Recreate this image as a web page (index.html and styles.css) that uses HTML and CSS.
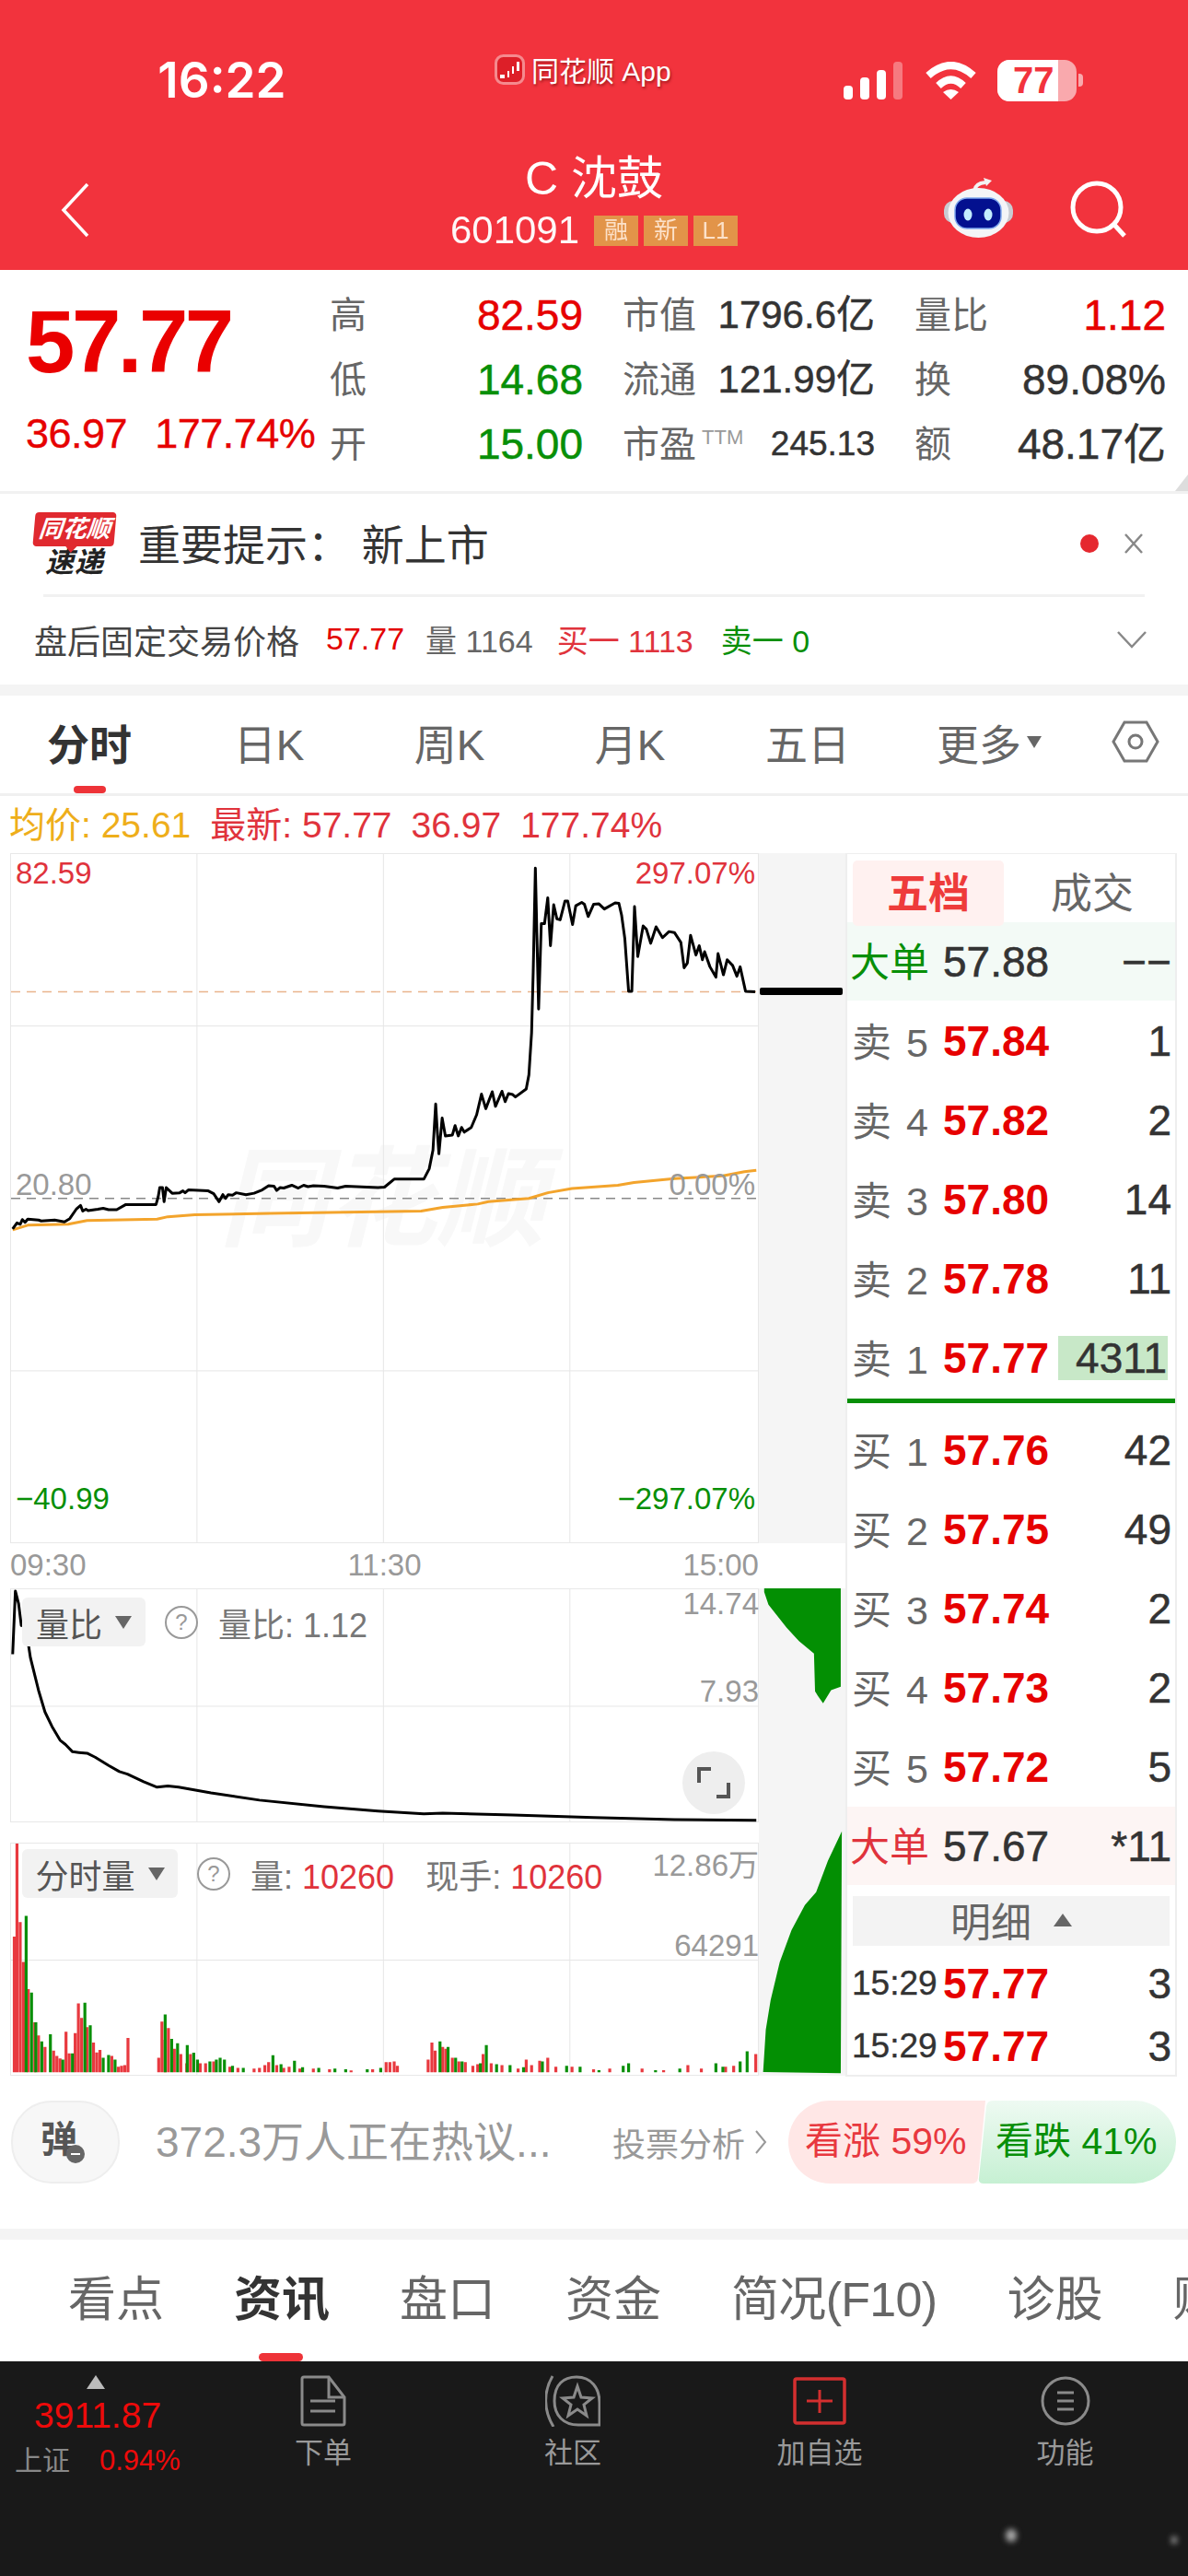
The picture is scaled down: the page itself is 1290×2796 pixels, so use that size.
FILE: index.html
```html
<!DOCTYPE html>
<html lang="zh-CN">
<head>
    <meta charset="UTF-8">
    <title>C沈鼓 601091</title>
    <link rel="stylesheet" href="styles.css">
</head>
<body>
<div class="page">

    <!-- red header -->
    <header class="topbar">
        <div class="status">
            <div class="status-time">16:22</div>
            <div class="status-app">
                <svg class="app-logo" width="33" height="33" viewBox="0 0 33 33">
                    <rect x="1.5" y="1.5" width="30" height="30" rx="8" fill="#dd1f28" stroke="#f58a8e" stroke-width="3"/>
                    <path d="M6 22h5v4H6zM14 18h2v7h-2zM19 13h2v8h-2zM24 8h3v10h-3z" fill="#fff"/>
                </svg>
                <span>同花顺 App</span>
            </div>
            <div class="status-icons">
                <div class="signal">
                    <i class="bar-1"></i><i class="bar-2"></i><i class="bar-3"></i><i class="bar-4"></i>
                </div>
                <svg width="57" height="41" viewBox="0 0 57 41">
                    <path d="M4 15Q28.500 -7 53 15" fill="none" stroke="#fff" stroke-width="8"/>
                    <path d="M15 26Q28.500 13 42 26" fill="none" stroke="#fff" stroke-width="8"/>
                    <path d="M20 33Q28.500 27 37 33L28.500 41Z" fill="#fff"/>
                </svg>
                <div class="battery"><div class="battery-level">77</div></div>
                <div class="battery-cap"></div>
            </div>
        </div>
        <div class="nav">
            <div class="nav-left">
                <svg width="32" height="60" viewBox="0 0 32 60"><path d="M29 2L3 30L29 58" fill="none" stroke="#fff" stroke-width="3.500"/></svg>
            </div>
            <div class="nav-title">
                <div class="stock-name">C 沈鼓</div>
                <div class="stock-code">
                    <span>601091</span>
                    <b class="tag">融</b><b class="tag">新</b><b class="tag">L1</b>
                </div>
            </div>
            <div class="nav-right">
                <svg width="75" height="66" viewBox="0 0 75 66">
                    <path d="M33 15Q34 7 45 6" fill="none" stroke="#f3f3f3" stroke-width="4"/>
                    <path d="M43 1L52 4L46 10Z" fill="#f3f3f3"/>
                    <rect x="0" y="26" width="75" height="24" rx="10" fill="#c9ccd2"/>
                    <ellipse cx="37.500" cy="39" rx="33" ry="27" fill="#f4f5f7"/>
                    <rect x="12" y="23" width="50" height="33" rx="13" fill="#03108f" stroke="#7fa8ee" stroke-width="1.500"/>
                    <ellipse cx="26" cy="41" rx="4.500" ry="6.500" fill="#c4edff"/>
                    <ellipse cx="48" cy="41" rx="4.500" ry="6.500" fill="#c4edff"/>
                </svg>
                <svg width="62" height="62" viewBox="0 0 62 62">
                    <circle cx="29" cy="29" r="26" fill="none" stroke="#fff" stroke-width="5"/>
                    <path d="M48 48L59 60" stroke="#fff" stroke-width="5"/>
                </svg>
            </div>
        </div>
    </header>

    <!-- quote summary -->
    <section class="quote">
        <div class="quote-main">
            <div class="last-price">57.77</div>
            <div class="last-change"><span>36.97</span><span>177.74%</span></div>
        </div>
        <div class="quote-grid">
            <div class="cell"><span class="label">高</span><span class="up big">82.59</span></div>
            <div class="cell"><span class="label">市值</span><span class="val">1796.6亿</span></div>
            <div class="cell"><span class="label">量比</span><span class="up big">1.12</span></div>
            <div class="cell"><span class="label">低</span><span class="down big">14.68</span></div>
            <div class="cell"><span class="label">流通</span><span class="val">121.99亿</span></div>
            <div class="cell"><span class="label">换</span><span class="val big">89.08%</span></div>
            <div class="cell"><span class="label">开</span><span class="down big">15.00</span></div>
            <div class="cell"><span class="label">市盈<sup class="ttm">TTM</sup></span><span class="val small">245.13</span></div>
            <div class="cell"><span class="label">额</span><span class="val big">48.17亿</span></div>
        </div>
        <div class="corner"></div>
    </section>

    <!-- notice -->
    <section class="notice">
        <div class="notice-top">
            <div class="flash-logo">
                <div class="flash-red">同花顺</div>
                <div class="flash-dark">速递</div>
            </div>
            <div class="notice-text">重要提示： 新上市</div>
            <div class="notice-dot"></div>
            <svg width="24" height="24" viewBox="0 0 24 24"><path d="M3 2L21 22M21 2L3 22" stroke="#888" stroke-width="2.500"/></svg>
        </div>
        <div class="notice-bottom">
            <span class="after-title">盘后固定交易价格</span>
            <span class="red">57.77</span>
            <span class="grey">量 1164</span>
            <span class="red-soft">买一 1113</span>
            <span class="green">卖一 0</span>
            <svg class="chev" width="34" height="20" viewBox="0 0 34 20"><path d="M2 2L17 18L32 2" fill="none" stroke="#888" stroke-width="2.500"/></svg>
        </div>
    </section>

    <!-- period tabs -->
    <nav class="periods">
        <div class="period active">分时</div>
        <div class="period">日K</div>
        <div class="period">周K</div>
        <div class="period">月K</div>
        <div class="period">五日</div>
        <div class="period">更多<i class="more-arrow"></i></div>
        <div class="period">
            <svg width="52" height="46" viewBox="0 0 52 46">
                <path d="M14 2H38L50 23L38 44H14L2 23Z" fill="none" stroke="#777" stroke-width="3"/>
                <circle cx="26" cy="23" r="7" fill="none" stroke="#777" stroke-width="3"/>
            </svg>
        </div>
    </nav>

    <div class="priceline">
        <span class="avg">均价: 25.61</span>
        <span class="new">最新: 57.77</span>
        <span class="new">36.97</span>
        <span class="new">177.74%</span>
    </div>

    <!-- chart + order book -->
    <section class="market">
        <div class="charts">
            <div class="chart-row main-row">
                <div class="plot">
                    <div class="watermark">同花顺</div>
                    <svg class="plot-svg" viewBox="19 50 1386 1465" preserveAspectRatio="none">
                        <path class="grid" d="M364 50V1515M710 50V1515M1056 50V1515M19 416H1405M19 1150H1405"/>
                        <path class="dash-orange" d="M19 343H1405"/>
                        <path class="dash-grey" d="M19 783H1405"/>
                        <polyline class="line-avg" points="22,850 50,840 125,838 160,830 290,827 310,822 360,818 500,815 780,810 820,802 885,795 905,790 980,783 1015,771 1060,762 1145,755 1175,749 1250,741 1340,735 1380,726 1402,723"/>
                        <polyline class="line-price" points="22,848 30,835 36,838 40,828 45,834 50,827 70,829 75,831 100,829 118,833 128,826 140,806 148,798 152,810 158,806 162,809 180,806 190,804 200,807 215,807 232,796 288,796 292,780 295,760 300,760 303,790 307,760 318,772 332,771 338,767 342,771 348,765 385,767 395,773 405,790 412,775 417,783 422,775 430,776 437,771 455,775 470,772 485,765 497,756 507,757 512,766 518,760 525,761 540,755 552,761 562,755 570,758 580,756 600,757 625,761 640,757 660,758 700,760 712,759 730,742 785,742 795,720 802,680 807,582 810,640 813,688 819,612 825,650 838,648 843,628 849,650 855,632 860,642 873,632 883,605 892,561 900,592 912,556 918,587 930,555 936,577 942,560 950,562 955,567 975,550 980,520 985,430 988,300 992,80 998,380 1003,198 1009,198 1015,143 1020,245 1026,158 1032,188 1038,190 1047,150 1052,150 1061,200 1067,160 1078,153 1083,157 1090,183 1100,157 1110,156 1120,167 1140,154 1147,155 1152,180 1158,230 1165,342 1171,342 1176,162 1182,268 1192,203 1198,210 1206,240 1216,205 1228,228 1240,215 1250,217 1262,238 1268,292 1274,282 1280,223 1290,265 1296,245 1302,275 1306,258 1316,290 1327,312 1331,262 1341,307 1348,275 1358,287 1366,310 1372,290 1382,342 1400,343"/>
                    </svg>
                    <span class="tag-tl red-soft">82.59</span>
                    <span class="tag-tr red-soft">297.07%</span>
                    <span class="tag-ml muted">20.80</span>
                    <span class="tag-mr muted">0.00%</span>
                    <span class="tag-bl green">−40.99</span>
                    <span class="tag-br green">−297.07%</span>
                </div>
                <div class="side"><div class="side-bar"></div></div>
            </div>

            <div class="axis"><span>09:30</span><span>11:30</span><span>15:00</span></div>

            <div class="chart-row ratio-row">
                <div class="plot ratio-plot">
                    <svg class="plot-svg" viewBox="19 160 1386 643" preserveAspectRatio="none">
                        <path class="grid" d="M364 160V803M710 160V803M1056 160V803M19 484H1405"/>
                        <polyline class="line-price" points="22,340 27,165 33,200 38,260 46,262 55,350 70,440 82,500 95,540 110,578 120,590 133,610 145,612 160,614 175,625 200,648 220,665 235,672 265,693 290,708 310,705 330,708 390,724 480,744 600,762 700,774 785,782 820,780 950,785 1100,792 1250,798 1402,800"/>
                    </svg>
                    <div class="plot-tools">
                        <div class="picker picker-ratio">量比<i class="picker-arrow"></i></div>
                        <div class="help">?</div>
                        <span>量比: 1.12</span>
                    </div>
                    <span class="scale scale-ratio-a">14.74</span>
                    <span class="scale scale-ratio-b">7.93</span>
                    <div class="expand">
                        <svg width="36" height="36" viewBox="0 0 36 36"><path d="M2 18V3H15M34 18V33H21" fill="none" stroke="#555" stroke-width="4"/></svg>
                    </div>
                </div>
                <div class="side">
                    <svg class="side-svg" viewBox="1405 160 160 643" preserveAspectRatio="none">
                        <polygon points="1415,160 1558,160 1558,430 1540,440 1525,476 1515,455 1510,443 1508,339 1480,305 1457,268 1423,205 1415,170" fill="#038f03"/>
                    </svg>
                </div>
            </div>

            <div class="chart-row volume-row">
                <div class="plot">
                    <svg class="plot-svg" viewBox="19 858 1386 639" preserveAspectRatio="none">
                        <path class="grid" d="M364 858V1497M710 858V1497M1056 858V1497M19 1180H1405"/>
                        <path class="vol-red" d="M25 1490V1115M30 1490V858M36 1490V1075M42 1490V1185M51 1490V1260M63 1490V1352M70 1490V1388M82 1490V1420M98 1490V1430M104 1490V1445M110 1490V1452M121 1490V1378M127 1490V1438M138 1490V1382M144 1490V1300M150 1490V1340M160 1490V1365M172 1490V1408M178 1490V1435M184 1490V1428M206 1490V1445M218 1490V1475M224 1490V1472M230 1490V1470M236 1490V1395M293 1490V1450M299 1490V1350M305 1490V1400M311 1490V1368M322 1490V1425M334 1490V1440M345 1490V1465M352 1490V1440M370 1490V1465M380 1490V1465M395 1490V1460M425 1490V1475M440 1490V1478M470 1490V1480M480 1490V1478M490 1490V1470M497 1490V1462M512 1490V1470M525 1490V1478M535 1490V1475M555 1490V1480M580 1490V1480M610 1490V1482M650 1490V1485M690 1490V1482M715 1490V1462M722 1490V1462M730 1490V1460M736 1490V1472M793 1490V1455M800 1490V1408M806 1490V1430M820 1490V1420M826 1490V1425M838 1490V1450M850 1490V1460M862 1490V1462M876 1490V1472M885 1490V1468M895 1490V1440M910 1490V1465M930 1490V1470M960 1490V1480M975 1490V1455M985 1490V1470M1000 1490V1458M1015 1490V1450M1030 1490V1475M1060 1490V1475M1100 1490V1482M1130 1490V1480M1190 1490V1480M1230 1490V1484M1275 1490V1470M1300 1490V1480M1345 1490V1475M1360 1490V1472M1401 1490V1440"/>
                        <path class="vol-green" d="M47 1490V1058M57 1490V1270M65 1490V1352M76 1490V1405M92 1490V1385M115 1490V1455M133 1490V1438M156 1490V1298M166 1490V1360M190 1490V1450M200 1490V1442M212 1490V1455M305 1490V1330M317 1490V1398M328 1490V1410M346 1490V1415M358 1490V1436M365 1490V1455M388 1490V1460M400 1490V1455M407 1490V1450M415 1490V1455M430 1490V1472M450 1490V1478M505 1490V1443M520 1490V1468M545 1490V1458M560 1490V1476M590 1490V1478M620 1490V1480M640 1490V1482M680 1490V1482M705 1490V1478M815 1490V1405M830 1490V1420M844 1490V1450M856 1490V1460M890 1490V1465M901 1490V1415M920 1490V1468M945 1490V1470M970 1490V1476M1005 1490V1460M1050 1490V1472M1075 1490V1475M1110 1490V1484M1155 1490V1472M1165 1490V1465M1215 1490V1484M1260 1490V1480M1327 1490V1465M1340 1490V1475M1372 1490V1460M1385 1490V1432"/>
                    </svg>
                    <div class="plot-tools volume-tools">
                        <div class="picker picker-volume">分时量<i class="picker-arrow"></i></div>
                        <div class="help">?</div>
                        <span>量: <em>10260</em></span>
                        <span class="now-hand">现手: <em>10260</em></span>
                    </div>
                    <span class="scale scale-vol-a">12.86万</span>
                    <span class="scale scale-vol-b">64291</span>
                </div>
                <div class="side">
                    <svg class="side-svg" viewBox="1405 858 160 639" preserveAspectRatio="none">
                        <polygon points="1560,827 1534,908 1512,994 1491,1029 1466,1098 1444,1186 1427,1290 1418,1371 1413,1487 1558,1490" fill="#038f03"/>
                    </svg>
                </div>
            </div>
        </div>

        <aside class="book">
            <div class="book-tabs">
                <div class="book-tab on">五档</div>
                <div class="book-tab">成交</div>
            </div>
            <div class="book-row big-sell"><span class="big-label green">大单</span><span class="price dark">57.88</span><span class="qty">−−</span></div>
            <div class="book-row"><span class="side-label">卖 5</span><span class="price">57.84</span><span class="qty">1</span></div>
            <div class="book-row"><span class="side-label">卖 4</span><span class="price">57.82</span><span class="qty">2</span></div>
            <div class="book-row"><span class="side-label">卖 3</span><span class="price">57.80</span><span class="qty">14</span></div>
            <div class="book-row"><span class="side-label">卖 2</span><span class="price">57.78</span><span class="qty">11</span></div>
            <div class="book-row"><span class="side-label">卖 1</span><span class="price">57.77</span><span class="qty qty-hl">4311</span></div>
            <div class="book-split"></div>
            <div class="book-row"><span class="side-label">买 1</span><span class="price">57.76</span><span class="qty">42</span></div>
            <div class="book-row"><span class="side-label">买 2</span><span class="price">57.75</span><span class="qty">49</span></div>
            <div class="book-row"><span class="side-label">买 3</span><span class="price">57.74</span><span class="qty">2</span></div>
            <div class="book-row"><span class="side-label">买 4</span><span class="price">57.73</span><span class="qty">2</span></div>
            <div class="book-row"><span class="side-label">买 5</span><span class="price">57.72</span><span class="qty">5</span></div>
            <div class="book-row big-buy"><span class="big-label red-soft">大单</span><span class="price dark">57.67</span><span class="qty">*11</span></div>
            <div class="detail-head">明细<i class="detail-arrow"></i></div>
            <div class="book-row tick"><span class="tick-time">15:29</span><span class="price">57.77</span><span class="qty green">3</span></div>
            <div class="book-row tick"><span class="tick-time">15:29</span><span class="price">57.77</span><span class="qty green">3</span></div>
        </aside>
    </section>

    <!-- discussion / vote -->
    <section class="talk">
        <div class="danmu">弹<i class="danmu-off"></i></div>
        <div class="talk-text">372.3万人正在热议...</div>
        <div class="vote-link">投票分析 <svg width="14" height="28" viewBox="0 0 14 28"><path d="M2 2L12 14L2 26" fill="none" stroke="#999" stroke-width="2"/></svg></div>
        <div class="vote">
            <svg class="vote-bg" width="421" height="90" viewBox="0 0 421 90">
                <defs>
                    <linearGradient id="voteGreen" x1="0" y1="0" x2="0" y2="1"><stop offset="0" stop-color="#eefaf2"/><stop offset="1" stop-color="#c6f0d3"/></linearGradient>
                </defs>
                <path d="M45 0H214L206 84Q205 90 199 90H45A45 45 0 0 1 45 0Z" fill="#ffe7e6"/>
                <path d="M222 0H376A45 45 0 0 1 376 90H212Q206 90 207 84L215 6Q216 0 222 0Z" fill="url(#voteGreen)"/>
            </svg>
            <span class="vote-up">看涨 59%</span>
            <span class="vote-down">看跌 41%</span>
        </div>
    </section>

    <!-- info tabs -->
    <nav class="info-tabs">
        <div class="info-tab">看点</div>
        <div class="info-tab active">资讯</div>
        <div class="info-tab">盘口</div>
        <div class="info-tab">资金</div>
        <div class="info-tab info-f10">简况(F10)</div>
        <div class="info-tab">诊股</div>
        <div class="info-tab">财务</div>
    </nav>

    <!-- bottom bar -->
    <footer class="dock">
        <div class="index">
            <i class="index-arrow"></i>
            <div class="index-value">3911.87</div>
            <div class="index-sub"><span>上证</span><b>0.94%</b></div>
        </div>
        <div class="dock-item">
            <svg width="50" height="56" viewBox="0 0 50 56">
                <path d="M2 4Q2 2 4 2H31L48 24V52Q48 54 46 54H4Q2 54 2 52Z" fill="none" stroke="#8a8a8a" stroke-width="3"/>
                <path d="M31 2V24H48M11 28H38M11 39H38" fill="none" stroke="#8a8a8a" stroke-width="3"/>
            </svg>
            <span>下单</span>
        </div>
        <div class="dock-item">
            <svg width="60" height="56" viewBox="0 0 60 56">
                <path d="M8 1C-2 18 -2 38 9 56" fill="none" stroke="#8a8a8a" stroke-width="3"/>
                <path d="M10 28C10 10 20 2 34 2C50 2 59 14 59 30V54H36C20 54 10 44 10 28Z" fill="none" stroke="#8a8a8a" stroke-width="3"/>
                <path d="M35 12L39 24L51 25L42 32L45 44L35 37L25 44L28 32L19 25L31 24Z" fill="none" stroke="#8a8a8a" stroke-width="3"/>
            </svg>
            <span>社区</span>
        </div>
        <div class="dock-item">
            <svg width="58" height="56" viewBox="0 0 58 56">
                <rect x="2" y="4" width="54" height="48" rx="2" fill="none" stroke="#d32f2f" stroke-width="3.500"/>
                <path d="M29 16V41M15 28H43" stroke="#d32f2f" stroke-width="3"/>
            </svg>
            <span>加自选</span>
        </div>
        <div class="dock-item">
            <svg width="54" height="56" viewBox="0 0 54 56">
                <circle cx="27" cy="28" r="25" fill="none" stroke="#8a8a8a" stroke-width="3"/>
                <path d="M18 19H36M18 28H36M18 37H36" stroke="#8a8a8a" stroke-width="3"/>
            </svg>
            <span>功能</span>
        </div>
        <i class="speck speck-a"></i>
        <i class="speck speck-b"></i>
    </footer>
</div>
</body>
</html>
```

FILE: styles.css
```css
* {
    box-sizing: border-box;
}
html, body {
    margin: 0;
    padding: 0;
}
body {
    background: #fff;
    font-family: "Liberation Sans", "Noto Sans CJK SC", sans-serif;
    color: #333;
}
.page {
    width: 1290px;
    height: 2796px;
    overflow: hidden;
    position: relative;
}
i, em {
    font-style: normal;
}

.red { color: #e30000; }
.red-soft { color: #e0333c; }
.green { color: #088f08; }
.grey { color: #666; }
.muted { color: #999; }

/* header */
.topbar {
    height: 293px;
    background: #f2333d;
    color: #fff;
}
.status {
    display: flex;
    align-items: center;
    height: 130px;
    padding-top: 44px;
}
.status-time {
    width: 482px;
    text-align: center;
    font-family: Inter, sans-serif;
    font-weight: 600;
    font-size: 53px;
}
.status-app {
    display: flex;
    align-items: center;
    gap: 7px;
    margin-left: 55px;
    margin-top: -24px;
    font-size: 30px;
    text-shadow: 1px 2px 3px rgba(90, 0, 0, 0.55);
}
.status-icons {
    display: flex;
    align-items: center;
    margin-left: auto;
    padding-right: 114px;
}
.signal {
    display: flex;
    align-items: flex-end;
    gap: 8px;
    height: 41px;
    margin-right: 24px;
}
.signal i {
    width: 10px;
    background: #fff;
    border-radius: 4px;
}
.bar-1 { height: 15px; }
.bar-2 { height: 24px; }
.bar-3 { height: 32px; }
.bar-4 { height: 41px; opacity: 0.35; }
.battery {
    width: 86px;
    height: 45px;
    margin-left: 22px;
    border-radius: 13px;
    background: #f9a9ad;
    overflow: hidden;
}
.battery-level {
    width: 66px;
    height: 45px;
    background: #fff;
    color: #f2333d;
    font-weight: bold;
    font-size: 40px;
    line-height: 45px;
    padding-left: 17px;
}
.battery-cap {
    width: 5px;
    height: 14px;
    margin-left: 2px;
    border-radius: 0 4px 4px 0;
    background: #f9a9ad;
}
.nav {
    display: grid;
    grid-template-columns: 1fr auto 1fr;
    height: 163px;
}
.nav-left {
    padding: 68px 0 0 66px;
}
.nav-title {
    text-align: center;
}
.stock-name {
    font-size: 50px;
    line-height: 70px;
    margin-top: 29px;
}
.stock-code {
    display: flex;
    align-items: center;
    gap: 6px;
    font-size: 42px;
    line-height: 42px;
    margin-top: 0;
    opacity: 0.96;
}
.stock-code span {
    margin-right: 10px;
}
.tag {
    width: 48px;
    height: 33px;
    background: #e2984a;
    color: #fde9cf;
    font-weight: normal;
    font-size: 26px;
    line-height: 33px;
    text-align: center;
}
.nav-right {
    display: flex;
    justify-content: flex-end;
    gap: 62px;
    padding: 62px 66px 0 0;
}
.nav-right svg:last-child {
    margin-top: 4px;
}

/* quote */
.quote {
    position: relative;
    display: grid;
    grid-template-columns: 358px 1fr;
    height: 243px;
    padding-top: 14px;
    border-bottom: 3px solid #f1f1f1;
}
.quote-main {
    padding-left: 28px;
}
.last-price {
    font-weight: bold;
    font-size: 96px;
    line-height: 96px;
    letter-spacing: -3.500px;
    color: #ea0000;
    margin-top: 16px;
}
.last-change {
    display: flex;
    gap: 30px;
    font-size: 45px;
    line-height: 50px;
    color: #e60000;
    margin-top: 27px;
    letter-spacing: -0.500px;
    -webkit-text-stroke: 0.4px #e60000;
}
.quote-grid {
    display: grid;
    grid-template-columns: 275px 274px 273px;
    grid-auto-rows: 70px;
    column-gap: 43px;
    align-items: center;
}
.cell {
    display: flex;
    justify-content: space-between;
    align-items: center;
    line-height: 50px;
}
.label {
    color: #666;
    font-size: 40px;
}
.ttm {
    font-size: 22px;
    color: #999;
    vertical-align: 14px;
    line-height: 0;
    margin-left: 6px;
}
.val {
    font-size: 42px;
    color: #333;
    -webkit-text-stroke: 0.5px #333;
}
.val.small {
    font-size: 37px;
}
.big {
    font-size: 46px;
    -webkit-text-stroke: 0.5px;
}
.up { color: #e60000; }
.down { color: #088f08; }
.corner {
    position: absolute;
    right: 0;
    bottom: 0;
    width: 0;
    height: 0;
    border-left: 14px solid transparent;
    border-bottom: 18px solid #ddd;
}

/* notice */
.notice {
    height: 207px;
    padding: 0 47px 0 37px;
}
.notice-top {
    display: flex;
    align-items: center;
    height: 112px;
    border-bottom: 3px solid #f1f1f1;
    margin-left: 10px;
    padding-bottom: 2px;
}
.flash-logo {
    width: 88px;
    margin-left: -10px;
    transform: translateY(2px);
}
.flash-red {
    position: relative;
    height: 37px;
    background: #e0292f;
    border-radius: 4px;
    color: #fff;
    font-weight: bold;
    font-style: italic;
    font-size: 26px;
    line-height: 37px;
    text-align: center;
    transform: skewX(-5deg);
}
.flash-red::after {
    content: "";
    position: absolute;
    left: 35px;
    top: 36px;
    border-left: 7px solid transparent;
    border-right: 7px solid transparent;
    border-top: 8px solid #e0292f;
}
.flash-dark {
    color: #222;
    font-weight: bold;
    font-style: italic;
    font-size: 31px;
    line-height: 35px;
    text-align: center;
    letter-spacing: 1px;
}
.notice-text {
    flex: 1;
    margin-left: 25px;
    padding-bottom: 4px;
    font-size: 46px;
    color: #333;
}
.notice-dot {
    width: 20px;
    height: 20px;
    margin-right: 26px;
    border-radius: 50%;
    background: #e5282f;
}
.notice-bottom {
    display: flex;
    align-items: center;
    height: 95px;
    padding-bottom: 4px;
    font-size: 34px;
}
.after-title {
    color: #444;
    font-size: 36px;
    margin-right: 29px;
}
.notice-bottom .red { margin-right: 23px; }
.notice-bottom .grey { margin-right: 26px; }
.notice-bottom .red-soft { margin-right: 30px; }
.chev {
    margin-left: auto;
    margin-right: -3px;
}

/* period tabs */
.periods {
    display: grid;
    grid-template-columns: 194px 196px 196px 196px 190px 204px 1fr;
    height: 121px;
    border-top: 12px solid #f4f4f4;
    border-bottom: 3px solid #f0f0f0;
}
.period {
    position: relative;
    display: flex;
    align-items: center;
    justify-content: center;
    font-size: 46px;
    color: #666;
    padding-bottom: 6px;
}
.period.active {
    font-weight: bold;
    color: #333;
}
.period.active::after {
    content: "";
    position: absolute;
    left: 80px;
    bottom: 0;
    width: 35px;
    height: 8px;
    border-radius: 4px;
    background: #ee3338;
}
.more-arrow {
    margin-left: 6px;
    border-left: 8px solid transparent;
    border-right: 8px solid transparent;
    border-top: 13px solid #666;
}
.priceline {
    display: flex;
    gap: 21px;
    height: 62px;
    padding: 8px 0 0 10px;
    font-size: 39px;
    line-height: 48px;
}
.avg { color: #eeae1b; }
.new { color: #e0333c; }

/* market */
.market {
    display: grid;
    grid-template-columns: 918px 360px;
    height: 1328px;
}
.charts {
    padding-left: 11px;
}
.chart-row {
    display: flex;
}
.main-row { height: 749px; }
.ratio-row { height: 276px; }
.volume-row { height: 253px; }
.plot {
    position: relative;
    width: 813px;
    height: 100%;
    border: 1px solid #e8e8e8;
}
.ratio-plot {
    height: 254px;
}
.plot-svg {
    position: absolute;
    inset: 0;
    width: 100%;
    height: 100%;
    overflow: visible;
}
.side {
    flex: 1;
    position: relative;
    background: #f5f5f5;
}
.side-bar {
    position: absolute;
    left: 1px;
    top: 146px;
    width: 90px;
    height: 8px;
    background: #000;
    border-radius: 2px;
}
.side-svg {
    display: block;
    width: 93px;
    height: 100%;
    overflow: visible;
}
.ratio-row .side-svg {
    height: 254px;
}
.grid {
    fill: none;
    stroke: #e6e6e6;
    stroke-width: 1;
    vector-effect: non-scaling-stroke;
}
.dash-orange, .dash-grey {
    fill: none;
    stroke-width: 1.500;
    stroke-dasharray: 10 7;
    vector-effect: non-scaling-stroke;
}
.dash-orange { stroke: #e9b48d; }
.dash-grey { stroke: #888; }
.line-price, .line-avg {
    fill: none;
    vector-effect: non-scaling-stroke;
    stroke-linejoin: round;
}
.line-price {
    stroke: #000;
    stroke-width: 3;
}
.line-avg {
    stroke: #f3a42c;
    stroke-width: 3;
}
.vol-red, .vol-green {
    fill: none;
    stroke-width: 3.200;
    vector-effect: non-scaling-stroke;
}
.vol-red { stroke: #e8393f; }
.vol-green { stroke: #098f09; }
.watermark {
    position: absolute;
    left: 226px;
    top: 316px;
    font-size: 118px;
    line-height: 118px;
    font-weight: bold;
    font-style: italic;
    color: #f8f8f8;
    white-space: nowrap;
}
.tag-tl, .tag-tr, .tag-ml, .tag-mr, .tag-bl, .tag-br {
    position: absolute;
    font-size: 33px;
    line-height: 36px;
}
.tag-tl { left: 5px; top: 3px; }
.tag-tr { right: 3px; top: 3px; }
.tag-ml { left: 5px; top: 341px; }
.tag-mr { right: 3px; top: 341px; }
.tag-bl { left: 5px; bottom: 29px; }
.tag-br { right: 3px; bottom: 29px; }
.axis {
    display: flex;
    justify-content: space-between;
    width: 813px;
    height: 49px;
    font-size: 33px;
    line-height: 48px;
    color: #999;
}
.plot-tools {
    position: absolute;
    left: 12px;
    top: 9px;
    display: flex;
    align-items: center;
    font-size: 36px;
    color: #777;
    white-space: nowrap;
}
.volume-tools {
    top: 6px;
}
.plot-tools em {
    color: #e0333c;
}
.picker {
    display: flex;
    align-items: center;
    justify-content: center;
    height: 53px;
    background: #f2f2f2;
    border-radius: 6px;
    color: #555;
    font-size: 36px;
}
.picker-ratio { width: 134px; }
.picker-volume { width: 169px; }
.picker-arrow {
    margin-left: 14px;
    border-left: 9px solid transparent;
    border-right: 9px solid transparent;
    border-top: 14px solid #666;
}
.help {
    width: 36px;
    height: 36px;
    margin: 0 22px 0 21px;
    border: 2px solid #999;
    border-radius: 50%;
    color: #999;
    font-size: 24px;
    line-height: 32px;
    text-align: center;
}
.now-hand {
    margin-left: 34px;
}
.scale {
    position: absolute;
    right: -1px;
    font-size: 33px;
    line-height: 36px;
    color: #999;
}
.scale-ratio-a { top: -2px; }
.scale-ratio-b { top: 93px; }
.scale-vol-a { top: 6px; }
.scale-vol-b { top: 93px; }
.expand {
    position: absolute;
    left: 729px;
    top: 176px;
    width: 68px;
    height: 68px;
    display: flex;
    align-items: center;
    justify-content: center;
    border-radius: 50%;
    background: #eee;
}

/* order book */
.book {
    border: 1px solid #eee;
    border-width: 1px 2px 2px 2px;
    height: 1328px;
}
.book-tabs {
    display: grid;
    grid-template-columns: 164px 1fr;
    height: 74px;
    padding: 7px 0 11px 6px;
    font-size: 45px;
    color: #666;
}
.book-tab {
    display: flex;
    align-items: center;
    justify-content: center;
    padding-bottom: 6px;
}
.book-tab:last-child {
    padding-left: 6px;
}
.book-tab.on {
    background: #fff1f0;
    border-radius: 5px;
    color: #ee3b3b;
    font-weight: bold;
}
.book-row {
    display: grid;
    grid-template-columns: 99px 1fr auto;
    align-items: center;
    height: 86px;
    padding: 0 4px 0 5px;
    font-size: 46px;
}
.big-sell {
    height: 85px;
    background: #f3faf6;
    margin-bottom: 1px;
}
.big-buy {
    background: #fdf5f4;
    height: 85px;
}
.big-label {
    font-size: 43px;
    margin-left: -2px;
    padding-bottom: 5px;
    white-space: nowrap;
}
.side-label {
    font-size: 43px;
    color: #666;
    padding-bottom: 5px;
    word-spacing: 4px;
}
.price {
    font-weight: bold;
    color: #e60000;
}
.price.dark {
    font-weight: normal;
    color: #333;
    -webkit-text-stroke: 0.6px #333;
}
.qty {
    color: #333;
    text-align: right;
    -webkit-text-stroke: 0.5px;
}
.qty-hl {
    width: 119px;
    height: 48px;
    margin-right: 4px;
    background: #c8e8c8;
    line-height: 48px;
    padding-right: 1px;
}
.book-split {
    height: 5px;
    background: #088f08;
    margin: 1px 0 8px;
}
.detail-head {
    display: flex;
    align-items: center;
    justify-content: center;
    height: 54px;
    margin: 12px 6px 7px 6px;
    background: #f3f3f3;
    font-size: 44px;
    color: #666;
    padding-bottom: 3px;
}
.detail-arrow {
    margin-left: 24px;
    border-left: 10px solid transparent;
    border-right: 10px solid transparent;
    border-bottom: 14px solid #666;
}
.tick {
    height: 68px;
}
.tick-time {
    font-size: 37px;
    color: #333;
    -webkit-text-stroke: 0.4px #333;
}

/* talk row */
.talk {
    display: flex;
    align-items: flex-start;
    height: 177px;
    padding: 26px 13px 0 12px;
    border-bottom: 12px solid #f4f4f4;
}
.danmu {
    position: relative;
    width: 118px;
    height: 90px;
    border: 2px solid #eee;
    border-radius: 44px;
    background: #f7f7f7;
    color: #555;
    font-size: 40px;
    font-weight: bold;
    line-height: 80px;
    padding-left: 30px;
}
.danmu-off {
    position: absolute;
    right: 36px;
    bottom: 20px;
    width: 20px;
    height: 20px;
    border-radius: 50%;
    background: #666;
}
.danmu-off::after {
    content: "";
    position: absolute;
    left: 5px;
    top: 9px;
    width: 10px;
    height: 2px;
    background: #fff;
}
.talk-text {
    margin-left: 39px;
    font-size: 46px;
    line-height: 90px;
    color: #999;
}
.vote-link {
    display: flex;
    align-items: center;
    gap: 10px;
    height: 90px;
    margin-left: auto;
    font-size: 36px;
    color: #999;
}
.vote {
    position: relative;
    display: flex;
    width: 421px;
    height: 90px;
    margin-left: 23px;
    font-size: 41px;
    line-height: 88px;
}
.vote-bg {
    position: absolute;
    inset: 0;
}
.vote-up, .vote-down {
    position: relative;
    white-space: nowrap;
}
.vote-up {
    width: 207px;
    padding-left: 18px;
    color: #e8383f;
}
.vote-down {
    padding-left: 18px;
    color: #088f08;
}

/* info tabs */
.info-tabs {
    display: flex;
    gap: 76px;
    height: 132px;
    padding: 29px 0 0 74px;
    overflow: hidden;
    white-space: nowrap;
    font-size: 52px;
    line-height: 72px;
    color: #666;
}
.info-tab {
    position: relative;
    height: 103px;
}
.info-f10 {
    letter-spacing: -0.700px;
}
.info-tab.active {
    color: #333;
    font-weight: bold;
}
.info-tab.active::after {
    content: "";
    position: absolute;
    left: 27px;
    bottom: 0;
    width: 48px;
    height: 9px;
    border-radius: 5px;
    background: #ee3338;
}

/* dock */
.dock {
    position: relative;
    display: grid;
    grid-template-columns: 215px 272px 270px 266px 1fr;
    height: 234px;
    background: #191919;
}
.index {
    position: relative;
    padding: 36px 0 0 37px;
}
.index-arrow {
    position: absolute;
    left: 94px;
    top: 15px;
    border-left: 10px solid transparent;
    border-right: 10px solid transparent;
    border-bottom: 15px solid #bbb;
}
.index-value {
    color: #ee0a0a;
    font-size: 39px;
    line-height: 46px;
}
.index-sub {
    display: flex;
    gap: 32px;
    margin: 3px 0 0 -21px;
    font-size: 30px;
    line-height: 46px;
    color: #888;
}
.index-sub b {
    font-weight: normal;
    font-size: 31px;
    color: #ee0a0a;
}
.dock-item {
    display: flex;
    flex-direction: column;
    align-items: center;
    gap: 7px;
    padding-top: 15px;
    font-size: 31px;
    line-height: 44px;
    color: #999;
}
.speck {
    position: absolute;
    border-radius: 50%;
    filter: blur(3px);
    background: #aaa;
}
.speck-a {
    left: 1092px;
    top: 182px;
    width: 12px;
    height: 14px;
}
.speck-b {
    left: 1272px;
    top: 190px;
    width: 6px;
    height: 8px;
}
```
